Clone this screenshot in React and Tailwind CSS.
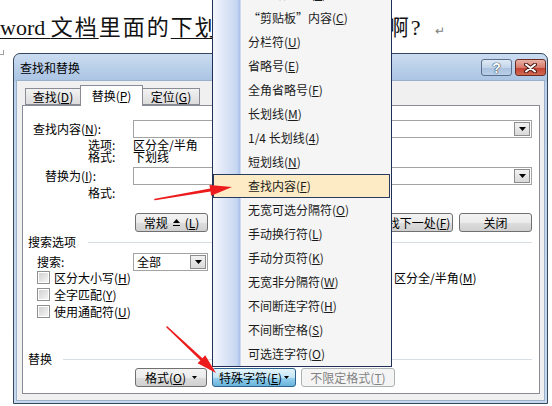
import React from "react";

const menuItems = [
  ["§ 分节符(", "A", ")"],
  ["¶ 段落符号(", "A", ")"],
  ["“剪贴板”内容(", "C", ")"],
  ["分栏符(", "U", ")"],
  ["省略号(", "E", ")"],
  ["全角省略号(", "F", ")"],
  ["长划线(", "M", ")"],
  ["1/4 长划线(", "4", ")"],
  ["短划线(", "N", ")"],
  ["查找内容(", "F", ")"],
  ["无宽可选分隔符(", "O", ")"],
  ["手动换行符(", "L", ")"],
  ["手动分页符(", "K", ")"],
  ["无宽非分隔符(", "W", ")"],
  ["不间断连字符(", "H", ")"],
  ["不间断空格(", "S", ")"],
  ["可选连字符(", "O", ")"],
];

const Btn = ({ className = "", children }) => (
  <div
    className={`h-[19px] flex items-center justify-center whitespace-nowrap rounded-[3px] border border-[#707070] bg-[linear-gradient(#f3f3f3_0%,#ebebeb_50%,#dddddd_51%,#d0d0d0_100%)] text-[12px] leading-none text-black ${className}`}
  >
    {children}
  </div>
);

const Tri = () => (
  <svg width="7" height="4" viewBox="0 0 7 4">
    <polygon points="0,0 7,0 3.5,4" fill="#000" />
  </svg>
);

const Combo = ({ className = "", children }) => (
  <div className={`h-[18px] flex border border-[#a3a3a3] bg-white ${className}`}>
    <div className="flex-1 pl-[3px] flex items-center text-[12px] leading-none">
      {children}
    </div>
    <div className="w-[16px] my-[1px] mr-[1px] flex items-center justify-center border border-[#8c8c8c] bg-[linear-gradient(#f2f2f2,#d9d9d9)]">
      <Tri />
    </div>
  </div>
);

const Check = () => (
  <span className="w-[13px] h-[13px] shrink-0 border border-[#8e8f8f] bg-white p-[1px] flex">
    <span className="flex-1 bg-[linear-gradient(135deg,#d2d2d2,#f4f4f4)]" />
  </span>
);

const Acc = ({ c }) => <span className="underline underline-offset-[1px]">{c}</span>;

export default function App() {
  return (
    <div className="relative w-[552px] h-[406px] overflow-hidden bg-white text-black font-['Noto_Sans_CJK_SC',sans-serif]">
      {/* document line */}
      <div className="pt-[14px] whitespace-nowrap text-[22px] leading-[28px] text-[#111] font-['Liberation_Serif','Noto_Sans_CJK_SC',serif]">
        <span className="underline decoration-1 underline-offset-[3px]">
          word <span className="tracking-[2px]">文档</span>
        </span>
        <span className="tracking-[2px]">里面的</span>
        <span className="underline decoration-1 underline-offset-[3px] tracking-[2px]">下划线怎么才能去掉</span>
        <span className="tracking-[2px]">啊</span>?
        <span className="ml-[14px] text-[12px] text-[#808080]">↵</span>
      </div>
      <div className="absolute left-0 top-[50px] w-[4px] h-[5px] border-r border-b border-[#a0a0a0]" />

      {/* dialog window */}
      <div className="absolute left-[13px] top-[53px] w-[535px] h-[351px] flex flex-col rounded-t-[7px] border border-[#34475f] bg-[linear-gradient(#cadcf0,#aac4e3_27px,#bdd2ea_28px,#c6d8ed)]">
        <div className="h-[26px] shrink-0 flex items-start">
          <span className="ml-[6px] mt-[8px] text-[12px] leading-[12px]">查找和替换</span>
          <div className="ml-auto mt-[5px] mr-[1px] flex gap-[3px]">
            <div className="w-[31px] h-[17px] flex items-center justify-center rounded-[3px] border border-[#5b6f8c] bg-[linear-gradient(#dfe9f5,#c3d5ea_50%,#a9c1de_51%,#b9cfe8)]">
              <span className="text-[14px] leading-none font-bold text-white font-['Liberation_Sans',sans-serif] [text-shadow:0_0_1px_#2c3e55,0_0_1px_#2c3e55,0_0_1px_#2c3e55]">
                ?
              </span>
            </div>
            <div className="w-[31px] h-[17px] flex items-center justify-center rounded-[3px] border border-[#6b2c24] bg-[linear-gradient(#eab2a6,#d77a6c_50%,#c43f30_51%,#d06a52)]">
              <svg width="13" height="10" viewBox="0 0 13 10">
                <path d="M2 1.5 L11 8.5 M11 1.5 L2 8.5" stroke="#4a1b16" strokeWidth="4" strokeLinecap="round" />
                <path d="M2 1.5 L11 8.5 M11 1.5 L2 8.5" stroke="#fff" strokeWidth="2" strokeLinecap="round" />
              </svg>
            </div>
          </div>
        </div>

        <div className="mx-[2px] mb-[2px] flex-1 flex flex-col bg-[#f0f0f0] border border-[#9bb0ca] text-[12px] leading-[12px]">
          {/* tabs */}
          <div className="mt-[4px] ml-[8px] h-[20px] flex items-start">
            <div className="mt-[3px] w-[55px] h-[17px] flex items-center justify-center border border-[#898c95] border-r-0 bg-[linear-gradient(#f2f2f2,#dcdcdc)]">
              查找(<Acc c="D" />)
            </div>
            <div className="relative z-10 w-[63px] h-[21px] flex items-center justify-center border border-[#898c95] border-b-0 bg-white">
              替换(<Acc c="P" />)
            </div>
            <div className="mt-[3px] w-[57px] h-[17px] flex items-center justify-center border border-[#898c95] border-l-0 bg-[linear-gradient(#f2f2f2,#dcdcdc)]">
              定位(<Acc c="G" />)
            </div>
          </div>

          {/* panel */}
          <div className="ml-[5px] w-[518px] h-[289px] flex flex-col border border-[#898c95] bg-white">
            <div className="mt-[14px] h-[18px] flex items-center">
              <span className="w-[110px] pl-[10px]">查找内容(<Acc c="N" />):</span>
              <Combo className="w-[399px]" />
            </div>
            <div className="mt-[1px] h-[12px] flex items-center">
              <span className="w-[110px] pl-[65px]">选项:</span>
              <span>区分全/半角</span>
            </div>
            <div className="h-[12px] flex items-center">
              <span className="w-[110px] pl-[65px]">格式:</span>
              <span>下划线</span>
            </div>
            <div className="mt-[4px] h-[18px] flex items-center">
              <span className="w-[110px] pl-[22px]">替换为(<Acc c="I" />):</span>
              <Combo className="w-[399px]" />
            </div>
            <div className="mt-[2px] h-[12px] flex items-center">
              <span className="w-[110px] pl-[65px]">格式:</span>
            </div>

            <div className="mt-[14px] h-[19px] flex">
              <Btn className="ml-[112px] w-[73px] gap-[5px]">
                常规
                <svg width="7" height="7" viewBox="0 0 7 7">
                  <polygon points="3.5,0 7,4 0,4" fill="#000" />
                  <rect x="0" y="6" width="7" height="1" fill="#000" />
                </svg>
                <span>(<Acc c="L" />)</span>
              </Btn>
              <div className="ml-auto mr-[7px] flex gap-[6px]">
                <Btn className="w-[70px]">替换(<Acc c="R" />)</Btn>
                <Btn className="w-[70px]">全部替换(<Acc c="A" />)</Btn>
                <Btn className="w-[80px]">查找下一处(<Acc c="F" />)</Btn>
                <Btn className="w-[73px]">关闭</Btn>
              </div>
            </div>

            <div className="mt-[4px] h-[12px] flex items-center">
              <span className="w-[65px] pl-[5px]">搜索选项</span>
              <div className="flex-1 mr-[7px] h-px bg-[#d5dfe5]" />
            </div>
            <div className="mt-[5px] h-[18px] flex items-center">
              <span className="w-[110px] pl-[14px]">搜索:</span>
              <Combo className="w-[75px]">全部</Combo>
            </div>

            <div className="-mt-[2px] h-[17px] grid grid-cols-[353px_1fr] items-center">
              <div className="pl-[14px] flex items-center gap-[4px]">
                <Check />
                <span>区分大小写(<Acc c="H" />)</span>
              </div>
              <div className="flex items-center gap-[5px]">
                <Check />
                <span>区分全/半角(<Acc c="M" />)</span>
              </div>
            </div>
            <div className="h-[17px] pl-[14px] flex items-center gap-[4px]">
              <Check />
              <span>全字匹配(<Acc c="Y" />)</span>
            </div>
            <div className="h-[17px] pl-[14px] flex items-center gap-[4px]">
              <Check />
              <span>使用通配符(<Acc c="U" />)</span>
            </div>

            <div className="mt-[33px] h-[12px] flex items-center">
              <span className="w-[40px] pl-[5px]">替换</span>
              <div className="flex-1 mr-[7px] h-px bg-[#d5dfe5]" />
            </div>
            <div className="mt-[3px] h-[19px] flex">
              <Btn className="ml-[112px] w-[72px] gap-[6px]">
                <span>格式(<Acc c="O" />)</span>
                <svg width="5" height="3" viewBox="0 0 5 3">
                  <polygon points="0,0 5,0 2.5,3" fill="#000" />
                </svg>
              </Btn>
              <div className="ml-[5px] w-[84px] h-[19px] flex items-center justify-center gap-[2px] rounded-[3px] border border-[#2c628b] bg-[linear-gradient(#e5f4fc,#c4e5f6_50%,#98d1ef_51%,#68b3db)] whitespace-nowrap">
                <span>特殊字符(<Acc c="E" />)</span>
                <svg width="5" height="3" viewBox="0 0 5 3">
                  <polygon points="0,0 5,0 2.5,3" fill="#000" />
                </svg>
              </div>
              <div className="ml-[5px] w-[94px] h-[19px] flex items-center justify-center rounded-[3px] border border-[#adb2b5] bg-[#f4f4f4] text-[#838383] whitespace-nowrap">
                不限定格式(<Acc c="T" />)
              </div>
            </div>
          </div>
        </div>
      </div>

      {/* special character menu */}
      <div className="absolute left-[212px] top-[-43px] w-[180px] border border-[#1f2f55] bg-[linear-gradient(to_right,#f4f6fc,#c6d6f1_24px,#a8bfe8_27px,#f5f5f5_28px)] text-[12px] leading-none text-[#1b1b1b]">
        {menuItems.map(([pre, key, post], i) =>
          i === 9 ? (
            <div key={i} className="h-[24px] mr-[1px] flex items-center pl-[34px] border border-[#2a3b60] bg-[#fdebc6]">
              {pre}
              <Acc c={key} />
              {post}
            </div>
          ) : (
            <div key={i} className="h-[24px] flex items-center pl-[35px] whitespace-nowrap">
              {pre}
              <Acc c={key} />
              {post}
            </div>
          )
        )}
      </div>

      {/* red arrows */}
      <svg className="absolute left-0 top-0 pointer-events-none" width="552" height="406" viewBox="0 0 552 406">
        <path d="M155 199.5 L210.5 190.6 L210.3 189.2 Z" fill="#ec1c1c" stroke="#ec1c1c" strokeWidth="1.6" strokeLinejoin="round" />
        <polygon points="232,187 211.1,195.8 209.5,185" fill="#ec1c1c" />
        <path d="M167 327 L201.9 358.8 L200.9 359.8 Z" fill="#ec1c1c" stroke="#ec1c1c" strokeWidth="1.6" strokeLinejoin="round" />
        <polygon points="216,373 197.6,363.3 205.2,355.3" fill="#ec1c1c" />
      </svg>
    </div>
  );
}
